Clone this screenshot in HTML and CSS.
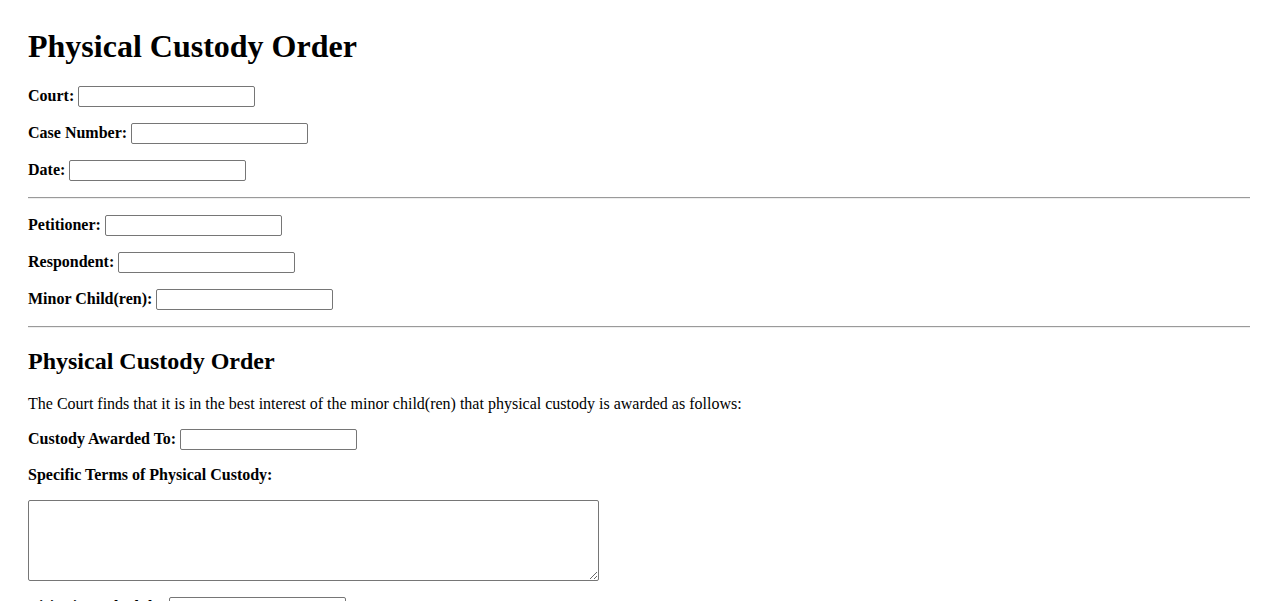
FILE: index.html
```html
<!DOCTYPE html>
<html lang="en">
<head>
    <meta charset="UTF-8">
    <meta name="viewport" content="width=device-width, initial-scale=1.0">
    <link rel="stylesheet" href="styles.css">
    <title>Physical Custody Order</title>
</head>
<body>
    <h1>Physical Custody Order</h1>

    <!-- Case details -->
    <div class="form-group">
        <label for="court">Court:</label>
        <input type="text" id="court">
    </div>
    <div class="form-group">
        <label for="caseNumber">Case Number:</label>
        <input type="text" id="caseNumber">
    </div>
    <div class="form-group">
        <label for="date">Date:</label>
        <input type="text" id="date">
    </div>

    <hr>

    <!-- Parties -->
    <div class="form-group">
        <label for="petitioner">Petitioner:</label>
        <input type="text" id="petitioner">
    </div>
    <div class="form-group">
        <label for="respondent">Respondent:</label>
        <input type="text" id="respondent">
    </div>
    <div class="form-group">
        <label for="children">Minor Child(ren):</label>
        <input type="text" id="children">
    </div>

    <hr>

    <h2>Physical Custody Order</h2>
    <p>The Court finds that it is in the best interest of the minor child(ren) that physical custody is awarded as follows:</p>

    <div class="form-group">
        <label for="awardedTo">Custody Awarded To:</label>
        <input type="text" id="awardedTo">
    </div>
    <div class="form-group">
        <label for="terms" class="block-label">Specific Terms of Physical Custody:</label>
        <textarea id="terms"></textarea>
    </div>
    <div class="form-group">
        <label for="schedule">Visitation Schedule:</label>
        <input type="text" id="schedule">
    </div>
</body>
</html>
```

FILE: styles.css
```css
body {
    margin: 0;
    padding: 28px;
    font-family: "Liberation Serif", "Times New Roman", serif;
    font-size: 16px;
    color: #000;
    background: #fff;
}
h1 {
    font-size: 32px;
    margin: 0 0 21px;
}
h2 {
    font-size: 24px;
    margin: 20px 0;
}
p {
    margin: 16px 0;
}
hr {
    margin: 8px 0;
    border: none;
    border-top: 1px solid #9a9a9a;
    border-bottom: 1px solid #eeeeee;
}
.form-group {
    margin: 16px 0;
}
label {
    font-weight: bold;
}
.block-label {
    display: block;
    margin-bottom: 16px;
}
input[type="text"] {
    box-sizing: border-box;
    width: 177px;
    height: 21px;
    padding: 1px 2px;
    border: 1px solid #767676;
    border-radius: 2px;
    font-family: "Liberation Sans", Arial, sans-serif;
    font-size: 13px;
    vertical-align: baseline;
}
textarea {
    box-sizing: border-box;
    display: block;
    width: 571px;
    height: 81px;
    border: 1px solid #767676;
    border-radius: 2px;
    font-family: "Liberation Mono", monospace;
}
```
